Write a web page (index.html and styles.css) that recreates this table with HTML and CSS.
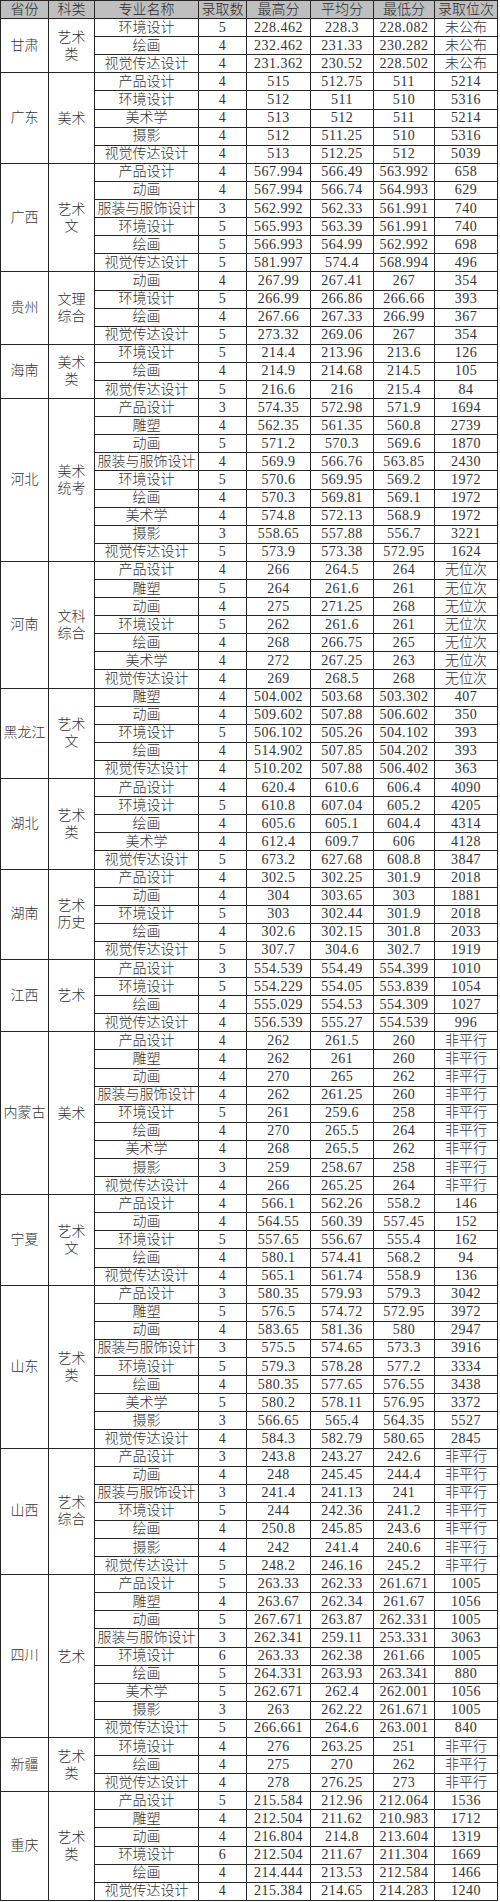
FILE: index.html
```html
<!DOCTYPE html>
<html lang="zh-CN">
<head>
<meta charset="utf-8">
<title>录取分数</title>
<link rel="stylesheet" href="styles.css">
</head>
<body>
<table class="score-table">
<colgroup>
<col class="c-prov"><col class="c-cat"><col class="c-major"><col class="c-count"><col class="c-num"><col class="c-num2"><col class="c-num3"><col class="c-rank">
</colgroup>
<thead>
<tr><th>省份</th><th>科类</th><th>专业名称</th><th>录取数</th><th>最高分</th><th>平均分</th><th>最低分</th><th>录取位次</th></tr>
</thead>
<tbody>
<tr><td class="prov" rowspan="3">甘肃</td><td class="cat" rowspan="3">艺术类</td><td>环境设计</td><td class="num">5</td><td class="num">228.462</td><td class="num">228.3</td><td class="num">228.082</td><td>未公布</td></tr>
<tr><td>绘画</td><td class="num">4</td><td class="num">232.462</td><td class="num">231.33</td><td class="num">230.282</td><td>未公布</td></tr>
<tr><td>视觉传达设计</td><td class="num">4</td><td class="num">231.362</td><td class="num">230.52</td><td class="num">228.502</td><td>未公布</td></tr>

<tr><td class="prov" rowspan="5">广东</td><td class="cat" rowspan="5">美术</td><td>产品设计</td><td class="num">4</td><td class="num">515</td><td class="num">512.75</td><td class="num">511</td><td class="num">5214</td></tr>
<tr><td>环境设计</td><td class="num">4</td><td class="num">512</td><td class="num">511</td><td class="num">510</td><td class="num">5316</td></tr>
<tr><td>美术学</td><td class="num">4</td><td class="num">513</td><td class="num">512</td><td class="num">511</td><td class="num">5214</td></tr>
<tr><td>摄影</td><td class="num">4</td><td class="num">512</td><td class="num">511.25</td><td class="num">510</td><td class="num">5316</td></tr>
<tr><td>视觉传达设计</td><td class="num">4</td><td class="num">513</td><td class="num">512.25</td><td class="num">512</td><td class="num">5039</td></tr>

<tr><td class="prov" rowspan="6">广西</td><td class="cat" rowspan="6">艺术文</td><td>产品设计</td><td class="num">4</td><td class="num">567.994</td><td class="num">566.49</td><td class="num">563.992</td><td class="num">658</td></tr>
<tr><td>动画</td><td class="num">4</td><td class="num">567.994</td><td class="num">566.74</td><td class="num">564.993</td><td class="num">629</td></tr>
<tr><td>服装与服饰设计</td><td class="num">3</td><td class="num">562.992</td><td class="num">562.33</td><td class="num">561.991</td><td class="num">740</td></tr>
<tr><td>环境设计</td><td class="num">5</td><td class="num">565.993</td><td class="num">563.39</td><td class="num">561.991</td><td class="num">740</td></tr>
<tr><td>绘画</td><td class="num">5</td><td class="num">566.993</td><td class="num">564.99</td><td class="num">562.992</td><td class="num">698</td></tr>
<tr><td>视觉传达设计</td><td class="num">5</td><td class="num">581.997</td><td class="num">574.4</td><td class="num">568.994</td><td class="num">496</td></tr>

<tr><td class="prov" rowspan="4">贵州</td><td class="cat" rowspan="4">文理综合</td><td>动画</td><td class="num">4</td><td class="num">267.99</td><td class="num">267.41</td><td class="num">267</td><td class="num">354</td></tr>
<tr><td>环境设计</td><td class="num">5</td><td class="num">266.99</td><td class="num">266.86</td><td class="num">266.66</td><td class="num">393</td></tr>
<tr><td>绘画</td><td class="num">4</td><td class="num">267.66</td><td class="num">267.33</td><td class="num">266.99</td><td class="num">367</td></tr>
<tr><td>视觉传达设计</td><td class="num">5</td><td class="num">273.32</td><td class="num">269.06</td><td class="num">267</td><td class="num">354</td></tr>

<tr><td class="prov" rowspan="3">海南</td><td class="cat" rowspan="3">美术类</td><td>环境设计</td><td class="num">5</td><td class="num">214.4</td><td class="num">213.96</td><td class="num">213.6</td><td class="num">126</td></tr>
<tr><td>绘画</td><td class="num">4</td><td class="num">214.9</td><td class="num">214.68</td><td class="num">214.5</td><td class="num">105</td></tr>
<tr><td>视觉传达设计</td><td class="num">5</td><td class="num">216.6</td><td class="num">216</td><td class="num">215.4</td><td class="num">84</td></tr>

<tr><td class="prov" rowspan="9">河北</td><td class="cat" rowspan="9">美术统考</td><td>产品设计</td><td class="num">3</td><td class="num">574.35</td><td class="num">572.98</td><td class="num">571.9</td><td class="num">1694</td></tr>
<tr><td>雕塑</td><td class="num">4</td><td class="num">562.35</td><td class="num">561.35</td><td class="num">560.8</td><td class="num">2739</td></tr>
<tr><td>动画</td><td class="num">5</td><td class="num">571.2</td><td class="num">570.3</td><td class="num">569.6</td><td class="num">1870</td></tr>
<tr><td>服装与服饰设计</td><td class="num">4</td><td class="num">569.9</td><td class="num">566.76</td><td class="num">563.85</td><td class="num">2430</td></tr>
<tr><td>环境设计</td><td class="num">5</td><td class="num">570.6</td><td class="num">569.95</td><td class="num">569.2</td><td class="num">1972</td></tr>
<tr><td>绘画</td><td class="num">4</td><td class="num">570.3</td><td class="num">569.81</td><td class="num">569.1</td><td class="num">1972</td></tr>
<tr><td>美术学</td><td class="num">4</td><td class="num">574.8</td><td class="num">572.13</td><td class="num">568.9</td><td class="num">1972</td></tr>
<tr><td>摄影</td><td class="num">3</td><td class="num">558.65</td><td class="num">557.88</td><td class="num">556.7</td><td class="num">3221</td></tr>
<tr><td>视觉传达设计</td><td class="num">5</td><td class="num">573.9</td><td class="num">573.38</td><td class="num">572.95</td><td class="num">1624</td></tr>

<tr><td class="prov" rowspan="7">河南</td><td class="cat" rowspan="7">文科综合</td><td>产品设计</td><td class="num">4</td><td class="num">266</td><td class="num">264.5</td><td class="num">264</td><td>无位次</td></tr>
<tr><td>雕塑</td><td class="num">5</td><td class="num">264</td><td class="num">261.6</td><td class="num">261</td><td>无位次</td></tr>
<tr><td>动画</td><td class="num">4</td><td class="num">275</td><td class="num">271.25</td><td class="num">268</td><td>无位次</td></tr>
<tr><td>环境设计</td><td class="num">5</td><td class="num">262</td><td class="num">261.6</td><td class="num">261</td><td>无位次</td></tr>
<tr><td>绘画</td><td class="num">4</td><td class="num">268</td><td class="num">266.75</td><td class="num">265</td><td>无位次</td></tr>
<tr><td>美术学</td><td class="num">4</td><td class="num">272</td><td class="num">267.25</td><td class="num">263</td><td>无位次</td></tr>
<tr><td>视觉传达设计</td><td class="num">4</td><td class="num">269</td><td class="num">268.5</td><td class="num">268</td><td>无位次</td></tr>

<tr><td class="prov" rowspan="5">黑龙江</td><td class="cat" rowspan="5">艺术文</td><td>雕塑</td><td class="num">4</td><td class="num">504.002</td><td class="num">503.68</td><td class="num">503.302</td><td class="num">407</td></tr>
<tr><td>动画</td><td class="num">4</td><td class="num">509.602</td><td class="num">507.88</td><td class="num">506.602</td><td class="num">350</td></tr>
<tr><td>环境设计</td><td class="num">5</td><td class="num">506.102</td><td class="num">505.26</td><td class="num">504.102</td><td class="num">393</td></tr>
<tr><td>绘画</td><td class="num">4</td><td class="num">514.902</td><td class="num">507.85</td><td class="num">504.202</td><td class="num">393</td></tr>
<tr><td>视觉传达设计</td><td class="num">4</td><td class="num">510.202</td><td class="num">507.88</td><td class="num">506.402</td><td class="num">363</td></tr>

<tr><td class="prov" rowspan="5">湖北</td><td class="cat" rowspan="5">艺术类</td><td>产品设计</td><td class="num">4</td><td class="num">620.4</td><td class="num">610.6</td><td class="num">606.4</td><td class="num">4090</td></tr>
<tr><td>环境设计</td><td class="num">5</td><td class="num">610.8</td><td class="num">607.04</td><td class="num">605.2</td><td class="num">4205</td></tr>
<tr><td>绘画</td><td class="num">4</td><td class="num">605.6</td><td class="num">605.1</td><td class="num">604.4</td><td class="num">4314</td></tr>
<tr><td>美术学</td><td class="num">4</td><td class="num">612.4</td><td class="num">609.7</td><td class="num">606</td><td class="num">4128</td></tr>
<tr><td>视觉传达设计</td><td class="num">5</td><td class="num">673.2</td><td class="num">627.68</td><td class="num">608.8</td><td class="num">3847</td></tr>

<tr><td class="prov" rowspan="5">湖南</td><td class="cat" rowspan="5">艺术历史</td><td>产品设计</td><td class="num">4</td><td class="num">302.5</td><td class="num">302.25</td><td class="num">301.9</td><td class="num">2018</td></tr>
<tr><td>动画</td><td class="num">4</td><td class="num">304</td><td class="num">303.65</td><td class="num">303</td><td class="num">1881</td></tr>
<tr><td>环境设计</td><td class="num">5</td><td class="num">303</td><td class="num">302.44</td><td class="num">301.9</td><td class="num">2018</td></tr>
<tr><td>绘画</td><td class="num">4</td><td class="num">302.6</td><td class="num">302.15</td><td class="num">301.8</td><td class="num">2033</td></tr>
<tr><td>视觉传达设计</td><td class="num">5</td><td class="num">307.7</td><td class="num">304.6</td><td class="num">302.7</td><td class="num">1919</td></tr>

<tr><td class="prov" rowspan="4">江西</td><td class="cat" rowspan="4">艺术</td><td>产品设计</td><td class="num">3</td><td class="num">554.539</td><td class="num">554.49</td><td class="num">554.399</td><td class="num">1010</td></tr>
<tr><td>环境设计</td><td class="num">5</td><td class="num">554.229</td><td class="num">554.05</td><td class="num">553.839</td><td class="num">1054</td></tr>
<tr><td>绘画</td><td class="num">4</td><td class="num">555.029</td><td class="num">554.53</td><td class="num">554.309</td><td class="num">1027</td></tr>
<tr><td>视觉传达设计</td><td class="num">4</td><td class="num">556.539</td><td class="num">555.27</td><td class="num">554.539</td><td class="num">996</td></tr>

<tr><td class="prov" rowspan="9">内蒙古</td><td class="cat" rowspan="9">美术</td><td>产品设计</td><td class="num">4</td><td class="num">262</td><td class="num">261.5</td><td class="num">260</td><td>非平行</td></tr>
<tr><td>雕塑</td><td class="num">4</td><td class="num">262</td><td class="num">261</td><td class="num">260</td><td>非平行</td></tr>
<tr><td>动画</td><td class="num">4</td><td class="num">270</td><td class="num">265</td><td class="num">262</td><td>非平行</td></tr>
<tr><td>服装与服饰设计</td><td class="num">4</td><td class="num">262</td><td class="num">261.25</td><td class="num">260</td><td>非平行</td></tr>
<tr><td>环境设计</td><td class="num">5</td><td class="num">261</td><td class="num">259.6</td><td class="num">258</td><td>非平行</td></tr>
<tr><td>绘画</td><td class="num">4</td><td class="num">270</td><td class="num">265.5</td><td class="num">264</td><td>非平行</td></tr>
<tr><td>美术学</td><td class="num">4</td><td class="num">268</td><td class="num">265.5</td><td class="num">262</td><td>非平行</td></tr>
<tr><td>摄影</td><td class="num">3</td><td class="num">259</td><td class="num">258.67</td><td class="num">258</td><td>非平行</td></tr>
<tr><td>视觉传达设计</td><td class="num">4</td><td class="num">266</td><td class="num">265.25</td><td class="num">264</td><td>非平行</td></tr>

<tr><td class="prov" rowspan="5">宁夏</td><td class="cat" rowspan="5">艺术文</td><td>产品设计</td><td class="num">4</td><td class="num">566.1</td><td class="num">562.26</td><td class="num">558.2</td><td class="num">146</td></tr>
<tr><td>动画</td><td class="num">4</td><td class="num">564.55</td><td class="num">560.39</td><td class="num">557.45</td><td class="num">152</td></tr>
<tr><td>环境设计</td><td class="num">5</td><td class="num">557.65</td><td class="num">556.67</td><td class="num">555.4</td><td class="num">162</td></tr>
<tr><td>绘画</td><td class="num">4</td><td class="num">580.1</td><td class="num">574.41</td><td class="num">568.2</td><td class="num">94</td></tr>
<tr><td>视觉传达设计</td><td class="num">4</td><td class="num">565.1</td><td class="num">561.74</td><td class="num">558.9</td><td class="num">136</td></tr>

<tr><td class="prov" rowspan="9">山东</td><td class="cat" rowspan="9">艺术类</td><td>产品设计</td><td class="num">3</td><td class="num">580.35</td><td class="num">579.93</td><td class="num">579.3</td><td class="num">3042</td></tr>
<tr><td>雕塑</td><td class="num">5</td><td class="num">576.5</td><td class="num">574.72</td><td class="num">572.95</td><td class="num">3972</td></tr>
<tr><td>动画</td><td class="num">4</td><td class="num">583.65</td><td class="num">581.36</td><td class="num">580</td><td class="num">2947</td></tr>
<tr><td>服装与服饰设计</td><td class="num">3</td><td class="num">575.5</td><td class="num">574.65</td><td class="num">573.3</td><td class="num">3916</td></tr>
<tr><td>环境设计</td><td class="num">5</td><td class="num">579.3</td><td class="num">578.28</td><td class="num">577.2</td><td class="num">3334</td></tr>
<tr><td>绘画</td><td class="num">4</td><td class="num">580.35</td><td class="num">577.65</td><td class="num">576.55</td><td class="num">3438</td></tr>
<tr><td>美术学</td><td class="num">5</td><td class="num">580.2</td><td class="num">578.11</td><td class="num">576.95</td><td class="num">3372</td></tr>
<tr><td>摄影</td><td class="num">3</td><td class="num">566.65</td><td class="num">565.4</td><td class="num">564.35</td><td class="num">5527</td></tr>
<tr><td>视觉传达设计</td><td class="num">4</td><td class="num">584.3</td><td class="num">582.79</td><td class="num">580.65</td><td class="num">2845</td></tr>

<tr><td class="prov" rowspan="7">山西</td><td class="cat" rowspan="7">艺术综合</td><td>产品设计</td><td class="num">3</td><td class="num">243.8</td><td class="num">243.27</td><td class="num">242.6</td><td>非平行</td></tr>
<tr><td>动画</td><td class="num">4</td><td class="num">248</td><td class="num">245.45</td><td class="num">244.4</td><td>非平行</td></tr>
<tr><td>服装与服饰设计</td><td class="num">3</td><td class="num">241.4</td><td class="num">241.13</td><td class="num">241</td><td>非平行</td></tr>
<tr><td>环境设计</td><td class="num">5</td><td class="num">244</td><td class="num">242.36</td><td class="num">241.2</td><td>非平行</td></tr>
<tr><td>绘画</td><td class="num">4</td><td class="num">250.8</td><td class="num">245.85</td><td class="num">243.6</td><td>非平行</td></tr>
<tr><td>摄影</td><td class="num">4</td><td class="num">242</td><td class="num">241.4</td><td class="num">240.6</td><td>非平行</td></tr>
<tr><td>视觉传达设计</td><td class="num">5</td><td class="num">248.2</td><td class="num">246.16</td><td class="num">245.2</td><td>非平行</td></tr>

<tr><td class="prov" rowspan="9">四川</td><td class="cat" rowspan="9">艺术</td><td>产品设计</td><td class="num">5</td><td class="num">263.33</td><td class="num">262.33</td><td class="num">261.671</td><td class="num">1005</td></tr>
<tr><td>雕塑</td><td class="num">4</td><td class="num">263.67</td><td class="num">262.34</td><td class="num">261.67</td><td class="num">1056</td></tr>
<tr><td>动画</td><td class="num">5</td><td class="num">267.671</td><td class="num">263.87</td><td class="num">262.331</td><td class="num">1005</td></tr>
<tr><td>服装与服饰设计</td><td class="num">3</td><td class="num">262.341</td><td class="num">259.11</td><td class="num">253.331</td><td class="num">3063</td></tr>
<tr><td>环境设计</td><td class="num">6</td><td class="num">263.33</td><td class="num">262.38</td><td class="num">261.66</td><td class="num">1005</td></tr>
<tr><td>绘画</td><td class="num">5</td><td class="num">264.331</td><td class="num">263.93</td><td class="num">263.341</td><td class="num">880</td></tr>
<tr><td>美术学</td><td class="num">5</td><td class="num">262.671</td><td class="num">262.4</td><td class="num">262.001</td><td class="num">1056</td></tr>
<tr><td>摄影</td><td class="num">3</td><td class="num">263</td><td class="num">262.22</td><td class="num">261.671</td><td class="num">1005</td></tr>
<tr><td>视觉传达设计</td><td class="num">5</td><td class="num">266.661</td><td class="num">264.6</td><td class="num">263.001</td><td class="num">840</td></tr>

<tr><td class="prov" rowspan="3">新疆</td><td class="cat" rowspan="3">艺术类</td><td>环境设计</td><td class="num">4</td><td class="num">276</td><td class="num">263.25</td><td class="num">251</td><td>非平行</td></tr>
<tr><td>绘画</td><td class="num">4</td><td class="num">275</td><td class="num">270</td><td class="num">262</td><td>非平行</td></tr>
<tr><td>视觉传达设计</td><td class="num">4</td><td class="num">278</td><td class="num">276.25</td><td class="num">273</td><td>非平行</td></tr>

<tr><td class="prov" rowspan="6">重庆</td><td class="cat" rowspan="6">艺术类</td><td>产品设计</td><td class="num">5</td><td class="num">215.584</td><td class="num">212.96</td><td class="num">212.064</td><td class="num">1536</td></tr>
<tr><td>雕塑</td><td class="num">4</td><td class="num">212.504</td><td class="num">211.62</td><td class="num">210.983</td><td class="num">1712</td></tr>
<tr><td>动画</td><td class="num">4</td><td class="num">216.804</td><td class="num">214.8</td><td class="num">213.604</td><td class="num">1319</td></tr>
<tr><td>环境设计</td><td class="num">6</td><td class="num">212.504</td><td class="num">211.67</td><td class="num">211.304</td><td class="num">1669</td></tr>
<tr><td>绘画</td><td class="num">4</td><td class="num">214.444</td><td class="num">213.53</td><td class="num">212.584</td><td class="num">1466</td></tr>
<tr><td>视觉传达设计</td><td class="num">4</td><td class="num">215.384</td><td class="num">214.65</td><td class="num">214.283</td><td class="num">1240</td></tr>
</tbody>
</table>
</body>
</html>
```

FILE: styles.css
```css
html, body {
  margin: 0;
  padding: 0;
  background: #ffffff;
}

.score-table {
  border-collapse: collapse;
  table-layout: fixed;
  width: 498px;
  font-family: "Liberation Serif", "Noto Sans CJK SC", serif;
  font-size: 14px;
  font-weight: 300;
  color: #333333;
}

.c-prov { width: 48px; }
.c-cat { width: 46px; }
.c-major { width: 104px; }
.c-count { width: 48px; }
.c-num { width: 64px; }
.c-num2 { width: 63px; }
.c-num3 { width: 61px; }
.c-rank { width: 63px; }

.score-table tr {
  height: 18.1px;
}

.score-table th,
.score-table td {
  border: 1px solid #262626;
  padding: 0;
  text-align: center;
  vertical-align: middle;
  line-height: 16px;
  font-weight: 300;
  white-space: nowrap;
  overflow: hidden;
}

.score-table th {
  background: #bfbfbf;
  color: #2a2a2a;
}

.score-table td.cat {
  white-space: normal;
  padding: 0 6px;
  line-height: 17px;
}

.score-table td.num {
  letter-spacing: 0.5px;
}
```
